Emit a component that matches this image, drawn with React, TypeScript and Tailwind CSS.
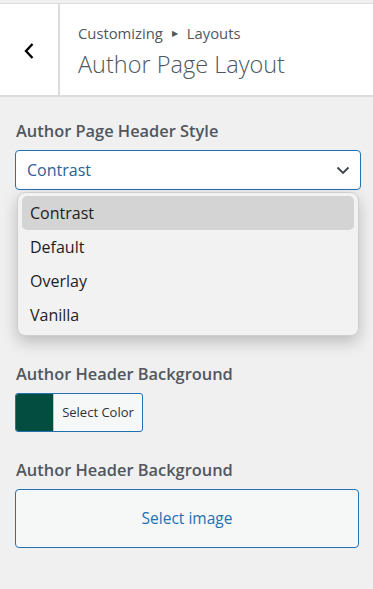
import { useState } from "react";

const options = ["Contrast", "Default", "Overlay", "Vanilla"];

function ChevronLeft() {
  return (
    <svg width="12" height="18" viewBox="0 0 12 18" fill="none">
      <path d="M9.5 2 L3 9 L9.5 16" stroke="#000" strokeWidth="2.4" />
    </svg>
  );
}

function ChevronDown() {
  return (
    <svg width="14" height="9" viewBox="0 0 14 9" fill="none">
      <path d="M1.5 1.5 L7 7 L12.5 1.5" stroke="#3c434a" strokeWidth="1.8" />
    </svg>
  );
}

export default function App() {
  const [value, setValue] = useState("Contrast");

  return (
    <div
      className="w-[373px] h-[589px] overflow-hidden bg-[#f0f0f1] pt-[3px]"
      style={{ fontFamily: '"Open Sans", "Noto Sans", sans-serif' }}
    >
      {/* ── Header ── */}
      <header className="flex h-[94px] bg-white border-t border-b-2 border-[#dcdcde]">
        <button className="w-[60px] flex items-center justify-center border-r-2 border-[#dcdcde] pt-[2px]">
          <ChevronLeft />
        </button>
        <div className="flex flex-col justify-center pl-[18px] pt-[2px]">
          <div className="flex items-center gap-[9px] text-[14.8px] leading-[20px] text-[#50575e]">
            <span>Customizing</span>
            <span className="text-[8px]">&#9654;</span>
            <span>Layouts</span>
          </div>
          <h1 className="text-[23.5px] leading-[30px] font-light text-[#50575e] mt-[6px]">Author Page Layout</h1>
        </div>
      </header>

      {/* ── Controls ── */}
      <div className="px-[15px] pt-[23px]">
        <label className="block text-[16.4px] leading-[22px] font-semibold text-[#50575e] pl-px">
          Author Page Header Style
        </label>
        <div className="relative mt-[8px] w-[346px]">
          <div className="h-[40px] flex items-center justify-between pl-[11px] pr-[10px] bg-white border border-[#2271b1] rounded-[4px]">
            <span className="text-[16px] text-[#2b6196]">{value}</span>
            <ChevronDown />
          </div>
          <div className="absolute left-[2px] w-[342px] top-[42px] bg-[#f2f2f2] border border-[#cfcfcf] rounded-[8px] shadow-[0_6px_16px_rgba(0,0,0,0.22)] px-[4px] py-[3px] flex flex-col">
            {options.map((o) => (
              <div
                key={o}
                onClick={() => setValue(o)}
                className={
                  "h-[34px] flex items-center px-[8px] rounded-[5px] text-[16px] text-[#1d1d1f] " +
                  (o === value ? "bg-[#d4d4d4]" : "")
                }
              >
                {o}
              </div>
            ))}
          </div>
        </div>

        <div className="h-[173px]" />

        <label className="block text-[16.4px] leading-[22px] font-semibold text-[#50575e] pl-px">
          Author Header Background
        </label>
        <button className="mt-[8px] flex h-[39px] w-[128px] border border-[#2271b1] rounded-[3px] overflow-hidden bg-[#f6f7f7]">
          <span className="w-[38px] h-full bg-[#024d40] border-r border-[#c3c4c7]" />
          <span className="flex-1 h-full flex items-center justify-center text-[13px] text-[#2c3338]">Select Color</span>
        </button>

        <label className="block mt-[27px] text-[16.4px] leading-[22px] font-semibold text-[#50575e] pl-px">
          Author Header Background
        </label>
        <button className="mt-[8px] w-[344px] h-[59px] flex items-center justify-center bg-[#f6f7f7] border border-[#2271b1] rounded-[4px] text-[15.5px] text-[#2271b1]">
          Select image
        </button>
      </div>
    </div>
  );
}
